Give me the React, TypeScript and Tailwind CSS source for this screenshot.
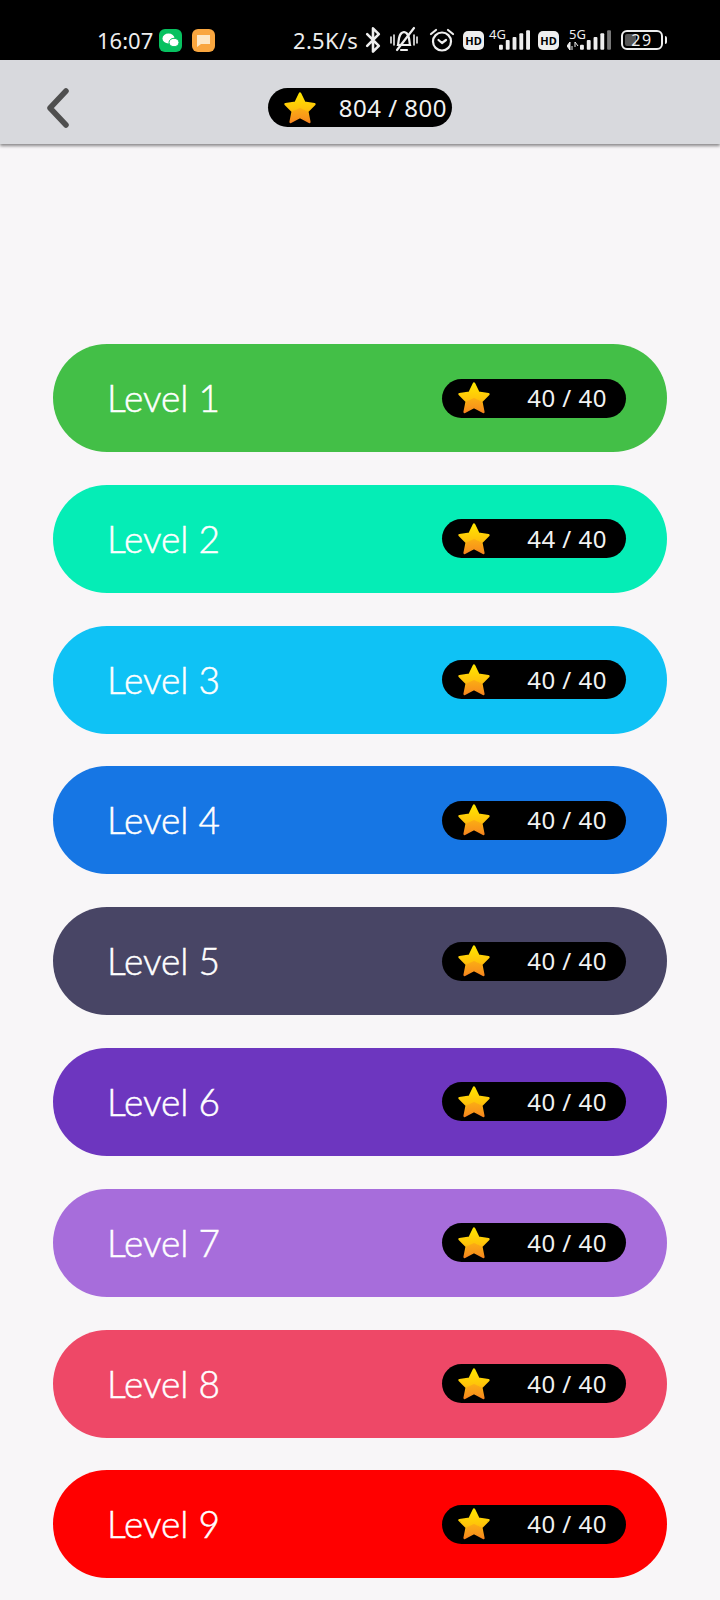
import { Bluetooth } from "lucide-react";

const levels = [
  { name: "Level 1", score: "40 / 40", color: "bg-[#43bf47]" },
  { name: "Level 2", score: "44 / 40", color: "bg-[#05edb6]" },
  { name: "Level 3", score: "40 / 40", color: "bg-[#0fc2f5]" },
  { name: "Level 4", score: "40 / 40", color: "bg-[#1676e4]" },
  { name: "Level 5", score: "40 / 40", color: "bg-[#484565]" },
  { name: "Level 6", score: "40 / 40", color: "bg-[#6d36bf]" },
  { name: "Level 7", score: "40 / 40", color: "bg-[#a76ddb]" },
  { name: "Level 8", score: "40 / 40", color: "bg-[#ee4867]" },
  { name: "Level 9", score: "40 / 40", color: "bg-[#ff0000]" },
];

function Star() {
  return (
    <svg viewBox="0 0 34 34" className="w-[34px] h-[34px] shrink-0">
      <defs>
        <linearGradient id="starGrad" x1="0.5" y1="0" x2="0.5" y2="1">
          <stop offset="0" stopColor="#ffe600" />
          <stop offset="0.55" stopColor="#ffc20a" />
          <stop offset="1" stopColor="#f5821f" />
        </linearGradient>
      </defs>
      <path
        d="M17 2.5 L21.5 11.8 L31.5 13.2 L24.3 20.4 L26.4 31 L17 26 L7.6 31 L9.7 20.4 L2.5 13.2 L12.5 11.8 Z"
        fill="url(#starGrad)"
        stroke="url(#starGrad)"
        strokeWidth="2.4"
        strokeLinejoin="round"
      />
      {/* darker lower facet */}
      <path d="M17 17 L24.3 20.4 L26.4 31 L17 26 L7.6 31 L9.7 20.4 Z" fill="#f7941d" opacity="0.5" />
    </svg>
  );
}

function ScorePill({ score, wide }: { score: string; wide?: boolean }) {
  return (
    <div
      className={`flex items-center justify-between w-[184px] h-[39px] rounded-full bg-black pl-[15px] ${
        wide ? "pr-[5px]" : "pr-[19px]"
      }`}
    >
      <Star />
      <span className="text-[24px] tracking-[0.5px] leading-none text-[#f2f2f2] font-['Noto_Sans',sans-serif]">
        {score}
      </span>
    </div>
  );
}

function Signal({ dim }: { dim?: boolean }) {
  const bars = [
    [0, 5],
    [7, 10],
    [14, 13],
    [21, 17],
    [28, 20],
  ];
  return (
    <svg viewBox="0 0 32 20" className="w-[31px] h-[20px]">
      {bars.map(([x, h], i) => (
        <rect
          key={x}
          x={x}
          y={20 - h}
          width="4"
          height={h}
          rx="1"
          fill={dim && i === 4 ? "#777" : "#eee"}
        />
      ))}
    </svg>
  );
}

function HdBadge() {
  return (
    <div className="flex items-center justify-center w-[21px] h-[19px] rounded-[5px] bg-[#eee] text-black text-[11px] font-bold leading-none">
      HD
    </div>
  );
}

function StatusBar() {
  return (
    <div className="flex items-center h-[60px] pt-5 pl-[97px] bg-black text-[#eee] font-['Noto_Sans',sans-serif] text-[22px] leading-none">
      <span className="w-[56px]">16:07</span>
      <div className="ml-[6px] w-[23px] h-[23px] rounded-[6px] bg-[#07c160]">
        <svg viewBox="0 0 23 23" className="w-[23px] h-[23px]">
          <ellipse cx="9.5" cy="9.5" rx="6" ry="5" fill="#fff" />
          <ellipse cx="15" cy="13.5" rx="5" ry="4.2" fill="#fff" stroke="#07c160" />
        </svg>
      </div>
      <div className="ml-[10px] w-[23px] h-[23px] rounded-[6px] bg-[#f9a63f]">
        <svg viewBox="0 0 23 23" className="w-[23px] h-[23px]">
          <path d="M5 6 H18 V15 H9 L5 18 Z" fill="#fde7c4" />
        </svg>
      </div>
      <span className="ml-[78px] w-[68px] tracking-[0.3px]">2.5K/s</span>
      <Bluetooth size={28} strokeWidth={2.2} className="-ml-[2px]" />
      <svg viewBox="0 0 30 28" fill="none" stroke="#eee" strokeWidth="2.2" strokeLinecap="round" className="ml-[2px] w-[30px] h-[28px]">
        <path d="M9 19 C10 15 9 7 15 6 C21 7 20 15 21 19 Z" />
        <path d="M12 24 H18" />
        <path d="M25 2 L8 24" />
        <path d="M2 11 V17 M5 9 V19 M25 9 V19 M28 11 V17" strokeWidth="1.6" />
      </svg>
      <svg viewBox="0 0 26 24" fill="none" stroke="#eee" strokeWidth="2.2" strokeLinecap="round" strokeLinejoin="round" className="ml-[10px] w-[26px] h-[24px]">
        <circle cx="13" cy="13.5" r="9" />
        <path d="M9.5 12 L13 15 L17 12" />
        <path d="M2 6 L7 2 M24 6 L19 2" />
      </svg>
      <div className="ml-[8px]">
        <HdBadge />
      </div>
      <div className="relative ml-[15px]">
        <span className="absolute -top-[2px] -left-[10px] text-[13px] leading-none">4G</span>
        <Signal />
      </div>
      <div className="ml-[8px]">
        <HdBadge />
      </div>
      <div className="relative ml-[8px] flex items-end h-[20px]">
        <span className="absolute -top-[2px] left-[2px] text-[13px] leading-none">5G</span>
        <svg viewBox="0 0 12 8" className="w-[12px] h-[8px] mr-[1px]">
          <path d="M0 4 L3 0 V8 Z M5 4 V8 M8 0 V5 M8 0 L11 4" fill="#eee" stroke="#eee" />
        </svg>
        <Signal dim />
      </div>
      <div className="ml-[10px] flex items-center">
        <div className="relative flex items-center justify-center w-[42px] h-[20px] rounded-[6px] border-2 border-[#eee] text-[16px]">
          <div className="absolute left-[2px] top-[2px] bottom-[2px] w-[11px] rounded-[2px] bg-[#555]" />
          <span className="relative tracking-[1.5px]">29</span>
        </div>
        <div className="ml-[2px] w-[2px] h-[8px] rounded-r bg-[#eee]" />
      </div>
    </div>
  );
}

function Header() {
  return (
    <div className="flex items-center h-[84px] pt-[11px] pl-[46px] bg-[#d8d9dd] shadow-[0_2px_3px_rgba(0,0,0,0.45)]">
      <svg viewBox="0 0 24 40" fill="none" stroke="#4f4f4f" strokeWidth="5.5" strokeLinecap="round" strokeLinejoin="round" className="w-[24px] h-[40px]">
        <path d="M20 3 L4 20 L20 37" />
      </svg>
      <div className="ml-[198px]">
        <ScorePill score="804 / 800" wide />
      </div>
    </div>
  );
}

export default function App() {
  return (
    <div className="w-[720px] h-[1600px] overflow-hidden bg-[#f8f6f8]">
      <StatusBar />
      <Header />
      <div className="flex flex-col gap-[32.8px] pt-[200px] px-[53px]">
        {levels.map((level) => (
          <div
            key={level.name}
            className={`flex items-center justify-between h-[108px] rounded-[54px] pr-[41px] ${level.color}`}
          >
            <span className="w-[221px] pb-[1px] text-center text-[37px] font-light [-webkit-text-stroke:0.5px_white] leading-none text-white font-['Lato',sans-serif]">
              {level.name}
            </span>
            <ScorePill score={level.score} />
          </div>
        ))}
      </div>
    </div>
  );
}
